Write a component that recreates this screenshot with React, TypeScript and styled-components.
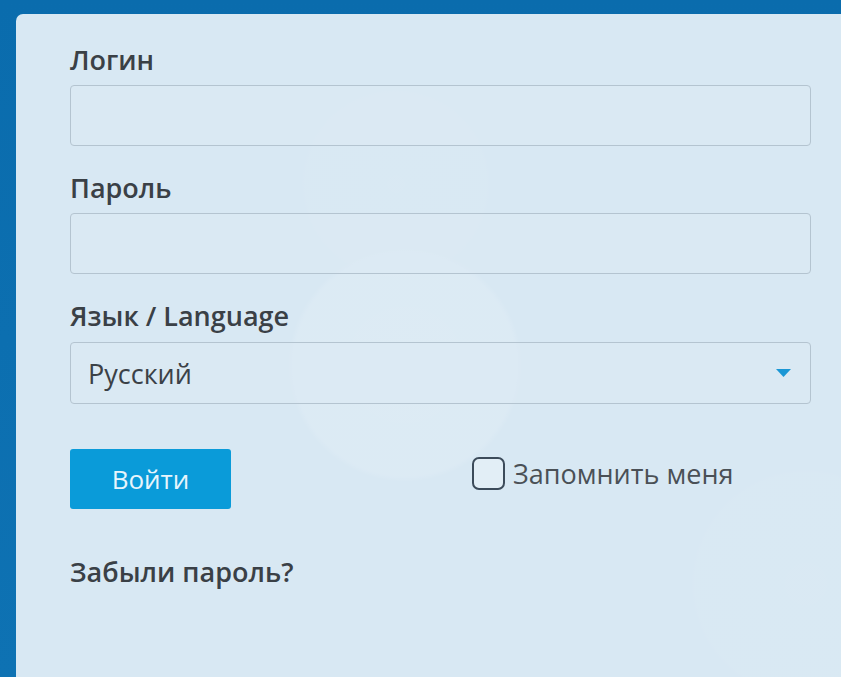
import React from "react";
import styled, { createGlobalStyle } from "styled-components";

const GlobalStyle = createGlobalStyle`
  html, body {
    margin: 0;
    padding: 0;
    height: 100%;
    overflow: hidden;
    background: #0b6eae;
  }
  * { box-sizing: border-box; }
`;

const Page = styled.div`
  min-height: 100vh;
  padding: 14px 0 0 16px;
  background: linear-gradient(180deg, #0a6cad 0%, #0e72b3 100%);
`;

const Panel = styled.form`
  min-height: calc(100vh - 14px);
  border-radius: 7px 0 0 0;
  padding: 28px 30px 40px 54px;
  font-family: "Open Sans", "Liberation Sans", sans-serif;
  background-color: #d8e8f3;
  background-image:
    radial-gradient(circle at 389px 351px, rgba(255, 255, 255, 0.12) 0, rgba(255, 255, 255, 0.11) 111px, rgba(255, 255, 255, 0) 117px),
    radial-gradient(circle at 380px 170px, rgba(255, 255, 255, 0.04) 0, rgba(255, 255, 255, 0.03) 90px, rgba(255, 255, 255, 0) 96px),
    radial-gradient(circle at 790px 570px, rgba(255, 255, 255, 0.04) 0, rgba(255, 255, 255, 0.035) 110px, rgba(255, 255, 255, 0) 116px);
  display: flex;
  flex-direction: column;
`;

const Field = styled.div`
  display: flex;
  flex-direction: column;
  & + & {
    margin-top: 24px;
  }
`;

const Label = styled.label`
  font-size: 27px;
  line-height: 36px;
  font-weight: 600;
  color: #3a4046;
  margin-bottom: 7px;
`;

const TextInput = styled.input`
  height: 61px;
  width: 100%;
  border: 1px solid #b4c4d0;
  border-radius: 4px;
  background: rgba(220, 234, 244, 0.6);
  font: inherit;
  font-size: 27px;
  padding: 0 17px;
  color: #3b4147;
  outline: none;
`;

const SelectBox = styled.div`
  height: 62px;
  margin-top: 1px;
  border: 1px solid #b4c4d0;
  border-radius: 4px;
  background: rgba(220, 234, 244, 0.6);
  display: flex;
  align-items: center;
  padding: 0 17px;
  font-size: 27px;
  color: #3b4147;
`;

const SelectValue = styled.span`
  flex: 1;
`;

const Caret = styled.svg`
  width: 15px;
  height: 8px;
  margin-right: 2px;
`;

const Actions = styled.div`
  display: flex;
  align-items: flex-start;
  margin-top: 45px;
`;

const SubmitButton = styled.button`
  width: 161px;
  height: 60px;
  border: none;
  border-radius: 3px;
  background: #0a9bd9;
  color: #e8f5fc;
  font-family: inherit;
  font-size: 26px;
  font-weight: 500;
  cursor: pointer;
`;

const Remember = styled.label`
  display: flex;
  align-items: center;
  gap: 8px;
  margin-left: 241px;
  margin-top: 8px;
  font-size: 27px;
  line-height: 33px;
  color: #4a5056;
  cursor: pointer;
`;

const Box = styled.span`
  width: 33px;
  height: 33px;
  border: 2px solid #3c4b5a;
  border-radius: 7px;
  background: rgba(235, 244, 250, 0.5);
`;

const ForgotLink = styled.a`
  margin-top: 45px;
  font-size: 27px;
  line-height: 36px;
  font-weight: 600;
  color: #3a4046;
  text-decoration: none;
`;

export default function App() {
  return (
    <>
      <GlobalStyle />
      <Page>
        <Panel onSubmit={(e) => e.preventDefault()}>
          <Field>
            <Label htmlFor="login">Логин</Label>
            <TextInput id="login" type="text" />
          </Field>
          <Field>
            <Label htmlFor="password">Пароль</Label>
            <TextInput id="password" type="password" />
          </Field>
          <Field>
            <Label>Язык / Language</Label>
            <SelectBox>
              <SelectValue>Русский</SelectValue>
              <Caret viewBox="0 0 15 8">
                <path d="M0 0 H15 L7.5 8 Z" fill="#1a97d5" />
              </Caret>
            </SelectBox>
          </Field>
          <Actions>
            <SubmitButton type="submit">Войти</SubmitButton>
            <Remember>
              <Box />
              Запомнить меня
            </Remember>
          </Actions>
          <ForgotLink href="#">Забыли пароль?</ForgotLink>
        </Panel>
      </Page>
    </>
  );
}
